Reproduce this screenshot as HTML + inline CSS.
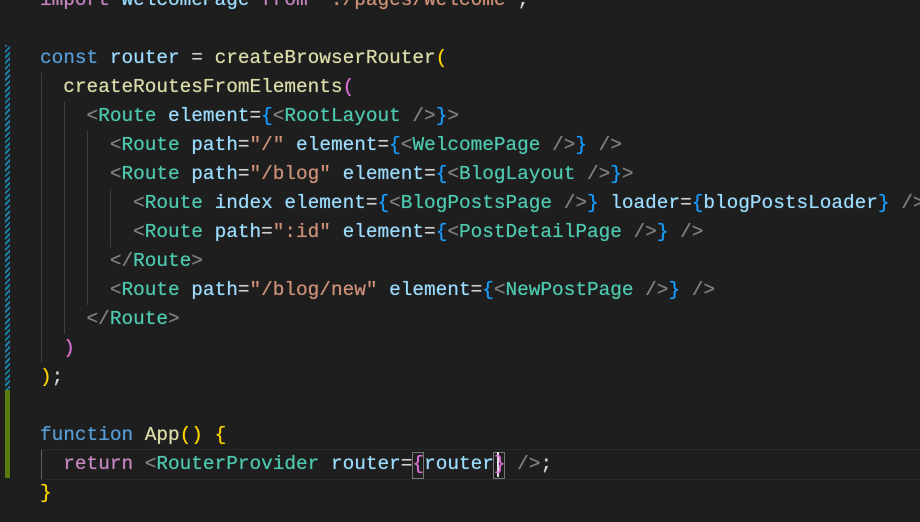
<!DOCTYPE html>
<html><head><meta charset="utf-8"><style>
html,body{margin:0;padding:0;background:#1e1e1e;width:920px;height:522px;overflow:hidden}
.c{position:absolute;left:40px;font-family:"Liberation Mono",monospace;font-size:19.4px;line-height:29px;white-space:pre;color:#d4d4d4;text-shadow:0 0 0.6px currentColor}
.l{position:absolute;left:0;height:29px}
.g{position:absolute;width:1px;background:#404040}
.k{color:#569cd6}.v{color:#9cdcfe}.f{color:#dcdcaa}.y{color:#ffd700}.p{color:#da70d6}.b{color:#179fff}
.t{color:#808080}.n{color:#4ec9b0}.s{color:#ce9178}.r{color:#c586c0}.w{color:#d4d4d4}
</style></head><body>
<div style="position:absolute;left:5px;top:45px;width:5px;height:345px;background:repeating-linear-gradient(135deg,#1b81a8 0 2px,#1e1e1e 2px 4px)"></div>
<div style="position:absolute;left:5px;top:390px;width:5px;height:88px;background:#587c0c"></div>
<div style="position:absolute;left:40px;top:449px;width:880px;height:29px;border-top:1px solid #282828;border-bottom:1px solid #282828"></div>
<div class="g" style="left:41px;top:73px;height:290px"></div>
<div class="g" style="left:64px;top:102px;height:232px"></div>
<div class="g" style="left:87px;top:131px;height:174px"></div>
<div class="g" style="left:110px;top:189px;height:58px"></div>
<div class="g" style="left:41px;top:450px;height:29px;background:#606060"></div>
<div style="position:absolute;left:412px;top:452px;width:10px;height:25px;border:1px solid #777"></div>
<div style="position:absolute;left:493px;top:452px;width:10px;height:25px;border:1px solid #777"></div>
<div style="position:absolute;left:497px;top:452px;width:2px;height:25px;background:#ddd"></div>
<div class="c" style="top:-14.5px">
<div class="l" style="top:0"><span class="r">import</span> <span class="v">WelcomePage</span> <span class="r">from</span> <span class="s">"./pages/Welcome"</span>;</div>
<div class="l" style="top:58px"><span class="k">const</span> <span class="v">router</span> = <span class="f">createBrowserRouter</span><span class="y">(</span></div>
<div class="l" style="top:87px">  <span class="f">createRoutesFromElements</span><span class="p">(</span></div>
<div class="l" style="top:116px">    <span class="t">&lt;</span><span class="n">Route</span> <span class="v">element</span>=<span class="b">{</span><span class="t">&lt;</span><span class="n">RootLayout</span> <span class="t">/&gt;</span><span class="b">}</span><span class="t">&gt;</span></div>
<div class="l" style="top:145px">      <span class="t">&lt;</span><span class="n">Route</span> <span class="v">path</span>=<span class="s">"/"</span> <span class="v">element</span>=<span class="b">{</span><span class="t">&lt;</span><span class="n">WelcomePage</span> <span class="t">/&gt;</span><span class="b">}</span> <span class="t">/&gt;</span></div>
<div class="l" style="top:174px">      <span class="t">&lt;</span><span class="n">Route</span> <span class="v">path</span>=<span class="s">"/blog"</span> <span class="v">element</span>=<span class="b">{</span><span class="t">&lt;</span><span class="n">BlogLayout</span> <span class="t">/&gt;</span><span class="b">}</span><span class="t">&gt;</span></div>
<div class="l" style="top:203px">        <span class="t">&lt;</span><span class="n">Route</span> <span class="v">index</span> <span class="v">element</span>=<span class="b">{</span><span class="t">&lt;</span><span class="n">BlogPostsPage</span> <span class="t">/&gt;</span><span class="b">}</span> <span class="v">loader</span>=<span class="b">{</span><span class="v">blogPostsLoader</span><span class="b">}</span> <span class="t">/&gt;</span></div>
<div class="l" style="top:232px">        <span class="t">&lt;</span><span class="n">Route</span> <span class="v">path</span>=<span class="s">":id"</span> <span class="v">element</span>=<span class="b">{</span><span class="t">&lt;</span><span class="n">PostDetailPage</span> <span class="t">/&gt;</span><span class="b">}</span> <span class="t">/&gt;</span></div>
<div class="l" style="top:261px">      <span class="t">&lt;/</span><span class="n">Route</span><span class="t">&gt;</span></div>
<div class="l" style="top:290px">      <span class="t">&lt;</span><span class="n">Route</span> <span class="v">path</span>=<span class="s">"/blog/new"</span> <span class="v">element</span>=<span class="b">{</span><span class="t">&lt;</span><span class="n">NewPostPage</span> <span class="t">/&gt;</span><span class="b">}</span> <span class="t">/&gt;</span></div>
<div class="l" style="top:319px">    <span class="t">&lt;/</span><span class="n">Route</span><span class="t">&gt;</span></div>
<div class="l" style="top:348px">  <span class="p">)</span></div>
<div class="l" style="top:377px"><span class="y">)</span>;</div>
<div class="l" style="top:435px"><span class="k">function</span> <span class="f">App</span><span class="y">()</span> <span class="y">{</span></div>
<div class="l" style="top:464px">  <span class="r">return</span> <span class="t">&lt;</span><span class="n">RouterProvider</span> <span class="v">router</span>=<span class="p">{</span><span class="v">router</span><span class="p">}</span> <span class="t">/&gt;</span>;</div>
<div class="l" style="top:493px"><span class="y">}</span></div>
</div>
</body></html>
